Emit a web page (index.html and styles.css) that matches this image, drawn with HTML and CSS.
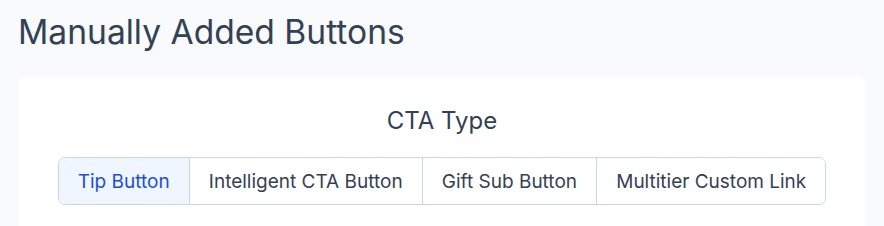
FILE: index.html
```html
<!DOCTYPE html>
<html lang="en">
<head>
  <meta charset="UTF-8">
  <meta name="viewport" content="width=device-width, initial-scale=1.0">
  <title>Manually Added Buttons</title>
  <link rel="stylesheet" href="styles.css">
</head>
<body>

<div class="page">
  <h1 class="page-title">Manually Added Buttons</h1>

  <div class="card">
    <h2 class="card-title">CTA Type</h2>

    <div class="btn-group">
      <button class="seg-button active">Tip Button</button>
      <button class="seg-button">Intelligent CTA Button</button>
      <button class="seg-button">Gift Sub Button</button>
      <button class="seg-button">Multitier Custom Link</button>
    </div>
  </div>
</div>

</body>
</html>
```

FILE: styles.css
```css
body {
  margin: 0;
  font-family: 'Inter', 'Noto Sans', sans-serif;
  background-color: #f8fafc;
  color: #334155;
}

.page {
  padding: 12px 18px 0 18px;
}

.page-title {
  margin: 0 0 24px 0;
  font-size: 33.6px;
  font-weight: 400;
  line-height: 40px;
  color: #334155;
}

.card {
  background-color: #fff;
  border-radius: 8px;
  box-shadow: 0 1px 2px rgba(15, 23, 42, 0.04);
  padding: 29px 20px 40px 20px;
  display: flex;
  flex-direction: column;
  align-items: center;
}

.card-title {
  margin: 0 0 20px 0;
  font-size: 24px;
  font-weight: 400;
  line-height: 32px;
  color: #334155;
}

.btn-group {
  display: flex;
  border: 1px solid #cbd5e1;
  border-radius: 7px;
  overflow: hidden;
}

.seg-button {
  font-family: inherit;
  font-size: 19px;
  color: #334155;
  background-color: #fff;
  border: none;
  border-left: 1px solid #cbd5e1;
  padding: 0 19.1px;
  height: 46px;
  cursor: pointer;
}

.seg-button:first-child {
  border-left: none;
}

.seg-button.active {
  background-color: #eff6ff;
  color: #1d4ed8;
}
```
